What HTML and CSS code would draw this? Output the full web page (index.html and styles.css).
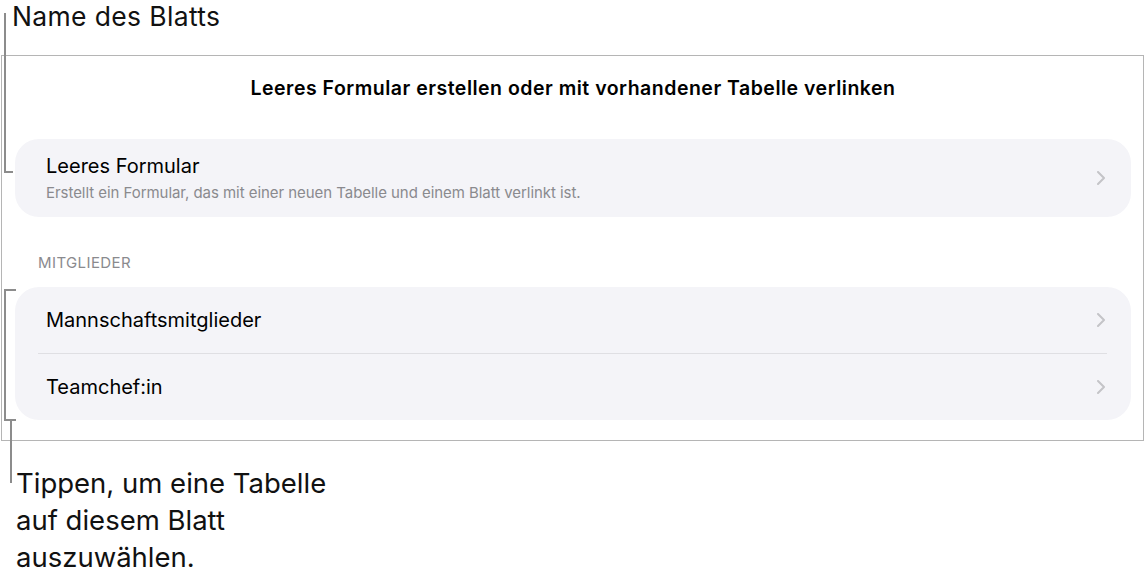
FILE: index.html
```html
<!DOCTYPE html>
<html lang="de">
<head>
<meta charset="utf-8">
<title>Blatt auswählen</title>
<link rel="stylesheet" href="styles.css">
</head>
<body>
<div class="page">
  <div class="callout callout-top">Name des Blatts</div>

  <section class="frame">
    <h1 class="sheet-title">Leeres Formular erstellen oder mit vorhandener Tabelle verlinken</h1>

    <div class="card card-single">
      <div class="row row-double">
        <div class="row-text">
          <div class="row-title">Leeres Formular</div>
          <div class="row-sub">Erstellt ein Formular, das mit einer neuen Tabelle und einem Blatt verlinkt ist.</div>
        </div>
        <svg class="chev" width="8" height="14" viewBox="0 0 8 14"><path d="M1 1 L7 7 L1 13" fill="none" stroke="#c4c4c8" stroke-width="2" stroke-linecap="round" stroke-linejoin="round"/></svg>
      </div>
    </div>

    <div class="section-head">MITGLIEDER</div>

    <div class="card">
      <div class="row">
        <div class="row-title">Mannschaftsmitglieder</div>
        <svg class="chev" width="8" height="14" viewBox="0 0 8 14"><path d="M1 1 L7 7 L1 13" fill="none" stroke="#c4c4c8" stroke-width="2" stroke-linecap="round" stroke-linejoin="round"/></svg>
      </div>
      <div class="sep"></div>
      <div class="row">
        <div class="row-title">Teamchef:in</div>
        <svg class="chev" width="8" height="14" viewBox="0 0 8 14"><path d="M1 1 L7 7 L1 13" fill="none" stroke="#c4c4c8" stroke-width="2" stroke-linecap="round" stroke-linejoin="round"/></svg>
      </div>
    </div>
  </section>

  <div class="callout callout-bottom">Tippen, um eine Tabelle<br>auf diesem Blatt<br>auszuwählen.</div>

  <div class="bracket bracket-top"></div>
  <div class="bracket bracket-group"></div>
  <div class="bracket-stem"></div>
</div>
</body>
</html>
```

FILE: styles.css
```css
* { box-sizing: border-box; }

html, body {
  margin: 0;
  padding: 0;
  background: #ffffff;
}

body {
  font-family: Inter, "Noto Sans", "Liberation Sans", sans-serif;
  color: #000000;
  width: 1144px;
  height: 572px;
  overflow: hidden;
}

.page {
  position: relative;
  width: 1144px;
  height: 572px;
}

.callout {
  font-weight: 400;
  color: #111111;
}

.callout-top {
  font-size: 26.5px;
  letter-spacing: 0.35px;
  height: 32px;
  line-height: 32px;
  padding-left: 12px;
}

.callout-bottom {
  font-size: 27.5px;
  letter-spacing: 0;
  margin-top: 24px;
  padding-left: 16px;
  line-height: 37px;
}

.frame {
  margin-top: 23px;
  margin-left: 1px;
  width: 1143px;
  height: 386px;
  border: 1px solid #b5b5b5;
  padding: 0 12px 0 13px;
  display: flex;
  flex-direction: column;
}

.sheet-title {
  margin: 21px 0 0 0;
  font-size: 19.5px;
  line-height: 22px;
  font-weight: 600;
  text-align: center;
  letter-spacing: 0.5px;
}

.card {
  background: #f4f4f8;
  border-radius: 24px;
  display: flex;
  flex-direction: column;
}

.card-single {
  margin-top: 40px;
  height: 78px;
}

.row {
  height: 66px;
  display: flex;
  align-items: center;
  justify-content: space-between;
  padding: 0 26px 0 31px;
}

.row-double {
  height: 78px;
}

.row-text {
  display: flex;
  flex-direction: column;
  gap: 6px;
}

.row-title {
  font-size: 20px;
  line-height: 24px;
  letter-spacing: 0;
  color: #000000;
}

.row-sub {
  font-size: 15px;
  line-height: 18px;
  color: #8a8a8e;
  letter-spacing: -0.05px;
}

.chev {
  flex: none;
  display: block;
}

.sep {
  height: 1px;
  background: #dfdfe3;
  margin: 0 24px 0 23px;
}

.section-head {
  margin: 37px 0 15px 23px;
  font-size: 15px;
  line-height: 18px;
  color: #8a8a8e;
  letter-spacing: 0.4px;
}

.bracket {
  position: absolute;
  border: 2px solid #8c8c8c;
  border-right: none;
}

.bracket-top {
  left: 4px;
  top: 13px;
  width: 9px;
  height: 160px;
  border-top: none;
}

.bracket-group {
  left: 4px;
  top: 289px;
  width: 12px;
  height: 132px;
}

.bracket-stem {
  position: absolute;
  left: 10px;
  top: 421px;
  width: 2px;
  height: 62px;
  background: #8c8c8c;
}
```
